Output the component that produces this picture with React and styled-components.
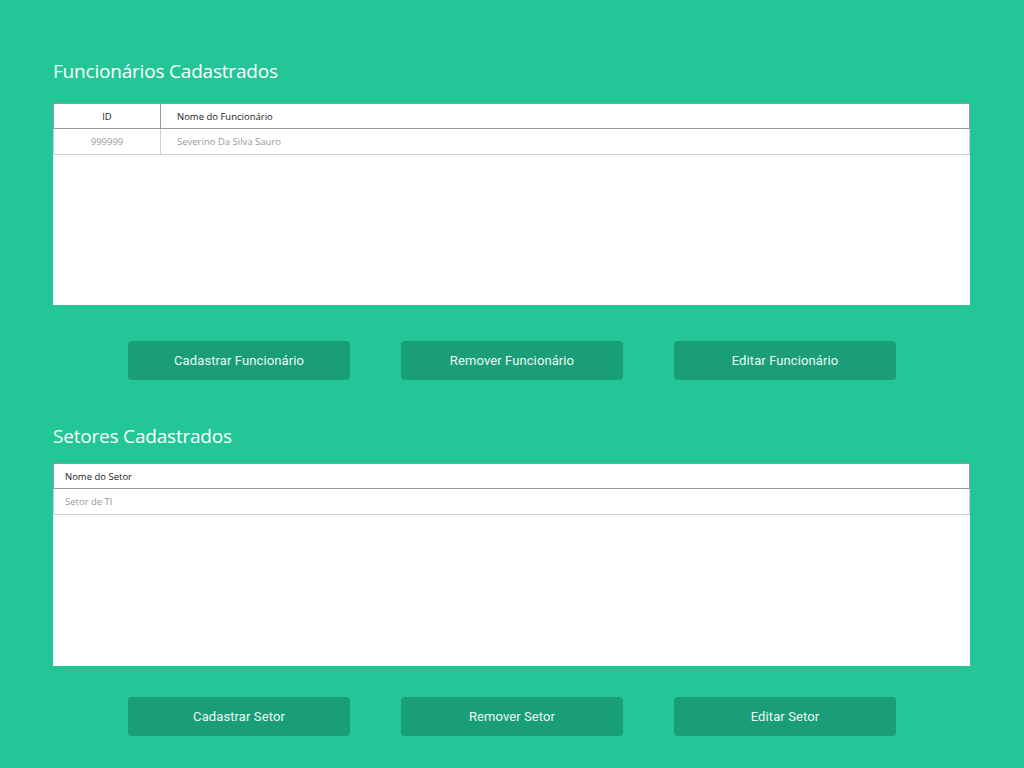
import React from "react";
import styled, { createGlobalStyle } from "styled-components";

const Global = createGlobalStyle`
  html, body { margin: 0; padding: 0; background: #23c696; }
  body { font-family: "Open Sans", "Noto Sans", sans-serif; }
`;

const Page = styled.div`
  width: 1024px;
  height: 768px;
  box-sizing: border-box;
  padding: 57px 54px 0 53px;
  display: flex;
  flex-direction: column;
`;

const Section = styled.section`
  display: flex;
  flex-direction: column;
  margin-bottom: ${(p) => p.$mb || 0}px;
`;

const Title = styled.h2`
  margin: 0 0 ${(p) => p.$mb}px;
  font-family: "Open Sans", "Noto Sans", sans-serif;
  font-weight: 400;
  font-size: 19px;
  line-height: 28px;
  height: 28px;
  color: #ffffff;
  letter-spacing: -0.2px;
`;

const TableBox = styled.div`
  background: #ffffff;
  height: ${(p) => p.$h}px;
  width: 917px;
`;

const Row = styled.div`
  display: grid;
  grid-template-columns: ${(p) => p.$cols};
  height: ${(p) => (p.$head ? 24 : 25)}px;
  border: 1px solid ${(p) => (p.$head ? "#9a9a9a" : "#cfcfcf")};
  border-top: ${(p) => (p.$head ? "1px solid #9a9a9a" : "none")};
  box-sizing: content-box;
  width: 915px;
`;

const Cell = styled.div`
  display: flex;
  align-items: center;
  justify-content: ${(p) => (p.$center ? "center" : "flex-start")};
  padding-left: ${(p) => (p.$center ? 0 : p.$pl || 16)}px;
  font-size: 9.5px;
  color: ${(p) => (p.$head ? "#222222" : "#9a9a9a")};
  border-right: ${(p) => (p.$divider ? `1px solid ${p.$head ? "#9a9a9a" : "#cfcfcf"}` : "none")};
  white-space: nowrap;
`;

const ButtonRow = styled.div`
  display: flex;
  justify-content: center;
  gap: 51px;
  margin-top: ${(p) => p.$mt}px;
  padding-left: 1px;
`;

const Button = styled.button`
  width: 222px;
  height: 39px;
  border: none;
  border-radius: 4px;
  background: #1a9e77;
  color: #eef8f4;
  font-family: Roboto, "Noto Sans", sans-serif;
  font-size: 13px;
  letter-spacing: 0.1px;
  cursor: pointer;
  padding: 0;
`;

export default function App() {
  return (
    <>
      <Global />
      <Page>
        <Section $mb={42}>
          <Title $mb={18}>Funcionários Cadastrados</Title>
          <TableBox $h={202}>
            <Row $head $cols="107px 1fr">
              <Cell $head $center $divider>ID</Cell>
              <Cell $head>Nome do Funcionário</Cell>
            </Row>
            <Row $cols="107px 1fr">
              <Cell $center $divider>999999</Cell>
              <Cell>Severino Da Silva Sauro</Cell>
            </Row>
          </TableBox>
          <ButtonRow $mt={36}>
            <Button>Cadastrar Funcionário</Button>
            <Button>Remover Funcionário</Button>
            <Button>Editar Funcionário</Button>
          </ButtonRow>
        </Section>
        <Section>
          <Title $mb={13}>Setores Cadastrados</Title>
          <TableBox $h={203}>
            <Row $head $cols="1fr">
              <Cell $head $pl={11}>Nome do Setor</Cell>
            </Row>
            <Row $cols="1fr">
              <Cell $pl={11}>Setor de TI</Cell>
            </Row>
          </TableBox>
          <ButtonRow $mt={31}>
            <Button>Cadastrar Setor</Button>
            <Button>Remover Setor</Button>
            <Button>Editar Setor</Button>
          </ButtonRow>
        </Section>
      </Page>
    </>
  );
}
